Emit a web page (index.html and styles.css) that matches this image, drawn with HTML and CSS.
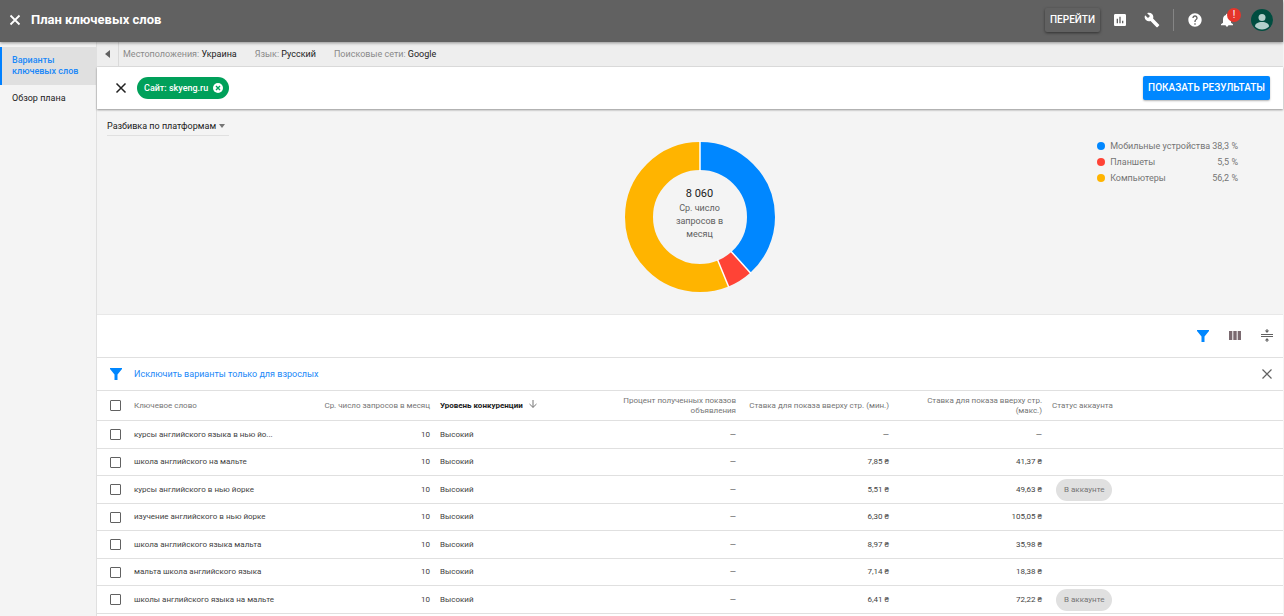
FILE: index.html
```html
<!DOCTYPE html>
<html lang="ru">
<head>
    <meta charset="UTF-8">
    <meta name="viewport" content="width=device-width, initial-scale=1.0">
    <title>План ключевых слов</title>
    <link rel="stylesheet" href="styles.css">
</head>
<body>
    <header class="topbar">
        <button class="icon-btn" type="button" aria-label="Закрыть">
            <svg width="16" height="16" viewBox="0 0 16 16"><path d="M3.500 3.500l9 9M12.500 3.500l-9 9" stroke="#fff" stroke-width="1.800"/></svg>
        </button>
        <h1>План ключевых слов</h1>
        <div class="topbar-tools">
            <button class="go-btn" type="button">ПЕРЕЙТИ</button>
            <button class="icon-btn" type="button" aria-label="Отчеты">
                <svg width="16" height="16" viewBox="0 0 24 24"><path d="M19 3H5c-1.100 0-2 .9-2 2v14c0 1.100.9 2 2 2h14c1.100 0 2-.9 2-2V5c0-1.100-.9-2-2-2zM9 17H7v-7h2v7zm4 0h-2V7h2v10zm4 0h-2v-4h2v4z"/></svg>
            </button>
            <button class="icon-btn" type="button" aria-label="Инструменты">
                <svg width="16" height="16" viewBox="0 0 24 24"><path d="M22.700 19l-9.100-9.100c.9-2.300.4-5-1.500-6.900-2-2-5-2.400-7.400-1.300L9 6 6 9 1.600 4.700C.4 7.100.9 10.100 2.900 12.100c1.900 1.900 4.600 2.400 6.900 1.500l9.100 9.100c.4.4 1 .4 1.400 0l2.300-2.300c.5-.4.5-1.100.1-1.400z"/></svg>
            </button>
            <span class="divider"></span>
            <button class="icon-btn" type="button" aria-label="Справка">
                <svg width="16" height="16" viewBox="0 0 24 24"><path d="M12 2C6.480 2 2 6.480 2 12s4.480 10 10 10 10-4.480 10-10S17.520 2 12 2zm1 17h-2v-2h2v2zm2.070-7.750l-.9.920C13.450 12.900 13 13.500 13 15h-2v-.5c0-1.100.45-2.100 1.170-2.830l1.240-1.260c.37-.36.59-.86.59-1.410 0-1.100-.9-2-2-2s-2 .9-2 2H8c0-2.210 1.790-4 4-4s4 1.790 4 4c0 .88-.36 1.680-.93 2.250z"/></svg>
            </button>
            <button class="icon-btn bell" type="button" aria-label="Уведомления">
                <svg width="16" height="16" viewBox="0 0 24 24"><path d="M12 22c1.100 0 2-.9 2-2h-4c0 1.100.89 2 2 2zm6-6v-5c0-3.070-1.640-5.640-4.500-6.320V4c0-.83-.67-1.500-1.500-1.500s-1.500.67-1.500 1.500v.68C7.630 5.360 6 7.920 6 11v5l-3 2.500V20h18v-1.500L18 16z"/></svg>
                <span class="badge">!</span>
            </button>
            <button class="icon-btn" type="button" aria-label="Аккаунт">
                <svg width="22" height="22" viewBox="0 0 22 22">
                    <circle cx="11" cy="11" r="11" fill="#004d40"/>
                    <circle cx="11" cy="8.500" r="3.500" fill="#b2cfcb"/>
                    <path d="M4 17.500c0-2.800 3-4.500 7-4.500s7 1.700 7 4.500c-1.800 2-4.300 3-7 3s-5.200-1-7-3z" fill="#b2cfcb"/>
                </svg>
            </button>
        </div>
    </header>

    <div class="layout">
        <nav class="sidebar">
            <a class="active" href="#ideas">Варианты ключевых слов</a>
            <a href="#overview">Обзор плана</a>
        </nav>

        <main class="main">
            <div class="settings">
                <button class="collapse" type="button" aria-label="Свернуть меню">
                    <svg width="5" height="8" viewBox="0 0 5 8"><path d="M5 0v8L0 4z"/></svg>
                </button>
                <span class="setting">Местоположения: <b>Украина</b></span>
                <span class="setting">Язык: <b>Русский</b></span>
                <span class="setting">Поисковые сети: <b>Google</b></span>
            </div>

            <div class="search">
                <button class="icon-btn" type="button" aria-label="Очистить">
                    <svg width="16" height="16" viewBox="0 0 16 16"><path d="M3.500 3.500l9 9M12.500 3.500l-9 9" stroke="#212121" stroke-width="1.500"/></svg>
                </button>
                <button class="chip" type="button">
                    Сайт: skyeng.ru
                    <svg width="10" height="10" viewBox="0 0 10 10"><circle cx="5" cy="5" r="5" fill="#fff"/><path d="M3 3l4 4M7 3l-4 4" stroke="#00a05a" stroke-width="1.400"/></svg>
                </button>
                <button class="results-btn" type="button">ПОКАЗАТЬ РЕЗУЛЬТАТЫ</button>
            </div>

            <section class="chart">
                <div class="breakdown">
                    <select aria-label="Разбивка">
                        <option>Разбивка по платформам</option>
                    </select>
                    <svg width="6" height="4" viewBox="0 0 6 4"><path d="M0 0h6L3 4z"/></svg>
                </div>

                <div class="donut">
                    <svg width="152" height="152" viewBox="0 0 152 152">
                        <g fill="none" stroke-width="28" transform="rotate(-90 76 76)">
                            <circle cx="76" cy="76" r="61" pathLength="1000" stroke="#0087ff" stroke-dasharray="383 617"/>
                            <circle cx="76" cy="76" r="61" pathLength="1000" stroke="#ff4336" stroke-dasharray="55 945" stroke-dashoffset="-383"/>
                            <circle cx="76" cy="76" r="61" pathLength="1000" stroke="#ffb400" stroke-dasharray="562 438" stroke-dashoffset="-438"/>
                        </g>
                        <g stroke="#fff" stroke-width="1.500">
                            <path d="M76 0v30"/>
                            <path d="M76 0v30" transform="rotate(137.900 76 76)"/>
                            <path d="M76 0v30" transform="rotate(157.700 76 76)"/>
                        </g>
                    </svg>
                    <div class="donut-label">
                        <strong>8 060</strong>
                        <span>Ср. число запросов в месяц</span>
                    </div>
                </div>

                <ul class="legend">
                    <li><i class="dot blue"></i>Мобильные устройства <span>38,3 %</span></li>
                    <li><i class="dot red"></i>Планшеты <span>5,5 %</span></li>
                    <li><i class="dot yellow"></i>Компьютеры <span>56,2 %</span></li>
                </ul>
            </section>

            <div class="toolbar">
                <button class="icon-btn blue-icon" type="button" aria-label="Фильтр">
                    <svg width="12" height="12" viewBox="0 0 12 12"><path d="M0 0h12v1L7.500 6.500V12h-3V6.500L0 1z"/></svg>
                </button>
                <button class="icon-btn columns-icon" type="button" aria-label="Столбцы">
                    <svg width="12" height="10" viewBox="0 0 12 10"><path d="M0 0h3.300v9H0zM4.300 0h3.400v9H4.300zM8.700 0H12v9H8.700z"/></svg>
                </button>
                <button class="icon-btn" type="button" aria-label="Плотность">
                    <svg width="12" height="14" viewBox="0 0 12 14"><path d="M0 5h12v1H0zM0 7h12v1H0zM5.500 0h1v1.500h1.700L6 4 3.800 1.500h1.700zM5.500 13h1v-1.500h1.700L6 9l-2.200 2.500h1.700z"/></svg>
                </button>
            </div>

            <div class="filter-row">
                <svg class="blue-icon" width="12" height="12" viewBox="0 0 12 12"><path d="M0 0h12v1L7.500 6.500V12h-3V6.500L0 1z"/></svg>
                <a href="#adult">Исключить варианты только для взрослых</a>
                <button class="icon-btn" type="button" aria-label="Закрыть фильтр">
                    <svg width="16" height="16" viewBox="0 0 16 16"><path d="M3.500 3.500l9 9M12.500 3.500l-9 9" stroke="#616161" stroke-width="1.200"/></svg>
                </button>
            </div>

            <table class="keywords">
                <colgroup>
                    <col class="col-check">
                    <col class="col-data" span="7">
                    <col>
                </colgroup>
                <thead>
                    <tr>
                        <th><input type="checkbox" aria-label="Выбрать все"></th>
                        <th>Ключевое слово</th>
                        <th class="num">Ср. число запросов в месяц</th>
                        <th class="sorted">Уровень конкуренции <svg width="8" height="8" viewBox="0 0 8 8"><path d="M4 0v7.300M.5 4L4 7.400 7.500 4" fill="none" stroke="#757575"/></svg></th>
                        <th class="num">Процент полученных показов объявления</th>
                        <th class="num">Ставка для показа вверху стр. (мин.)</th>
                        <th class="num">Ставка для показа вверху стр. (макс.)</th>
                        <th>Статус аккаунта</th>
                        <th></th>
                    </tr>
                </thead>
                <tbody>
                    <tr>
                        <td><input type="checkbox" aria-label="курсы английского языка в нью йо..."></td>
                        <td>курсы английского языка в нью йо...</td>
                        <td class="num">10</td>
                        <td>Высокий</td>
                        <td class="num">—</td>
                        <td class="num">—</td>
                        <td class="num">—</td>
                        <td></td>
                        <td></td>
                    </tr>
                    <tr>
                        <td><input type="checkbox" aria-label="школа английского на мальте"></td>
                        <td>школа английского на мальте</td>
                        <td class="num">10</td>
                        <td>Высокий</td>
                        <td class="num">—</td>
                        <td class="num">7,85 ₴</td>
                        <td class="num">41,37 ₴</td>
                        <td></td>
                        <td></td>
                    </tr>
                    <tr>
                        <td><input type="checkbox" aria-label="курсы английского в нью йорке"></td>
                        <td>курсы английского в нью йорке</td>
                        <td class="num">10</td>
                        <td>Высокий</td>
                        <td class="num">—</td>
                        <td class="num">5,51 ₴</td>
                        <td class="num">49,63 ₴</td>
                        <td><span class="status">В аккаунте</span></td>
                        <td></td>
                    </tr>
                    <tr>
                        <td><input type="checkbox" aria-label="изучение английского в нью йорке"></td>
                        <td>изучение английского в нью йорке</td>
                        <td class="num">10</td>
                        <td>Высокий</td>
                        <td class="num">—</td>
                        <td class="num">6,30 ₴</td>
                        <td class="num">105,05 ₴</td>
                        <td></td>
                        <td></td>
                    </tr>
                    <tr>
                        <td><input type="checkbox" aria-label="школа английского языка мальта"></td>
                        <td>школа английского языка мальта</td>
                        <td class="num">10</td>
                        <td>Высокий</td>
                        <td class="num">—</td>
                        <td class="num">8,97 ₴</td>
                        <td class="num">35,98 ₴</td>
                        <td></td>
                        <td></td>
                    </tr>
                    <tr>
                        <td><input type="checkbox" aria-label="мальта школа английского языка"></td>
                        <td>мальта школа английского языка</td>
                        <td class="num">10</td>
                        <td>Высокий</td>
                        <td class="num">—</td>
                        <td class="num">7,14 ₴</td>
                        <td class="num">18,38 ₴</td>
                        <td></td>
                        <td></td>
                    </tr>
                    <tr>
                        <td><input type="checkbox" aria-label="школы английского языка на мальте"></td>
                        <td>школы английского языка на мальте</td>
                        <td class="num">10</td>
                        <td>Высокий</td>
                        <td class="num">—</td>
                        <td class="num">6,41 ₴</td>
                        <td class="num">72,22 ₴</td>
                        <td><span class="status">В аккаунте</span></td>
                        <td></td>
                    </tr>
                </tbody>
            </table>
        </main>
    </div>
</body>
</html>
```
FILE: styles.css
```css
* {
    box-sizing: border-box;
}
body {
    display: flex;
    flex-direction: column;
    min-height: 100vh;
    margin: 0;
    padding-right: 1px;
    font-family: Roboto, 'Liberation Sans', sans-serif;
    font-size: 9px;
    line-height: 10px;
    color: #212121;
    background: #f4f4f4;
}
button, select {
    font: inherit;
    color: inherit;
    border: none;
    background: none;
    padding: 0;
    cursor: pointer;
}
svg {
    display: block;
    fill: currentColor;
}
a {
    text-decoration: none;
}
.icon-btn {
    display: flex;
    align-items: center;
    justify-content: center;
    min-width: 16px;
    color: #616161;
}

/* верхняя панель */
.topbar {
    position: relative;
    z-index: 2;
    display: flex;
    align-items: center;
    height: 42px;
    padding: 0 10px 2px 7px;
    color: #fff;
    background: #616161;
    box-shadow: 0 1px 3px rgba(0,0,0,0.4);
}
.topbar .icon-btn {
    color: #fff;
}
.topbar h1 {
    margin: 0 0 0 8px;
    font-size: 13px;
    line-height: 20px;
    font-weight: 700;
}
.topbar-tools {
    display: flex;
    align-items: center;
    gap: 16px;
    margin-left: auto;
}
.go-btn {
    height: 24px;
    padding: 0 5px;
    margin-right: -4px;
    font-size: 10px;
    font-weight: 500;
    border-radius: 2px;
    box-shadow: 0 1px 3px rgba(0,0,0,0.5);
}
.divider {
    width: 1px;
    height: 22px;
    margin: 0 -3px;
    background: #858585;
}
.bell {
    position: relative;
}
.badge {
    position: absolute;
    top: -4px;
    right: -6px;
    width: 14px;
    height: 14px;
    border-radius: 50%;
    font-size: 10px;
    line-height: 14px;
    background: #e5352b;
}

.layout {
    display: flex;
    flex: 1;
}
.sidebar {
    flex: 0 0 96px;
    padding-top: 5px;
}
.sidebar a {
    display: block;
    padding: 8px 12px;
    line-height: 11px;
    color: #212121;
}
.sidebar .active {
    padding: 8px 10px;
    border-left: 2px solid #0080ff;
    font-weight: 500;
    color: #1a88f8;
    background: #e0e0e0;
}
.main {
    flex: 1;
    min-width: 0;
    border-left: 1px solid #e0e0e0;
    background: #fff;
}

.settings {
    display: flex;
    align-items: center;
    gap: 18px;
    height: 25px;
    color: #8a8a8a;
    background: #eee;
    border-bottom: 1px solid #e0e0e0;
}
.settings b {
    font-weight: 400;
    color: #212121;
}
.collapse {
    display: flex;
    align-items: center;
    justify-content: center;
    width: 22px;
    height: 100%;
    margin-right: -14px;
    color: #616161;
    border-right: 1px solid #dadada;
}

.search {
    position: relative;
    z-index: 1;
    display: flex;
    align-items: center;
    height: 42px;
    padding: 0 13px 0 16px;
    background: #fff;
    box-shadow: 0 1px 2px rgba(0,0,0,0.4);
}
.chip {
    display: flex;
    align-items: center;
    gap: 5px;
    height: 22px;
    margin-left: 8px;
    padding: 0 6px 0 7px;
    border-radius: 11px;
    font-weight: 500;
    color: #fff;
    background: #00a05a;
}
.results-btn {
    height: 24px;
    margin-left: auto;
    padding: 0 5px;
    border-radius: 2px;
    font-size: 10px;
    font-weight: 500;
    color: #fff;
    background: #0087ff;
    box-shadow: 0 1px 2px rgba(0,0,0,0.3);
}

/* диаграмма по платформам */
.chart {
    display: grid;
    grid-template-columns: 1fr auto 1fr;
    align-items: start;
    height: 205px;
    padding-left: 10px;
    background: #f4f4f4;
}
.breakdown {
    position: relative;
    justify-self: start;
    margin-top: 7px;
    border-bottom: 1px solid #e0e0e0;
}
.breakdown select {
    display: block;
    width: 122px;
    height: 19px;
    appearance: none;
}
.breakdown svg {
    position: absolute;
    top: 8px;
    right: 4px;
    color: #757575;
    pointer-events: none;
}
.donut {
    display: grid;
    place-items: center;
    margin: 32px 0 0 9px;
}
.donut svg, .donut-label {
    grid-area: 1 / 1;
}
.donut-label {
    width: 52px;
    padding-bottom: 8px;
    line-height: 13px;
    text-align: center;
    color: #616161;
}
.donut-label strong {
    display: block;
    font-size: 11px;
    line-height: 16px;
    font-weight: 400;
    color: #212121;
}
.legend {
    justify-self: end;
    min-width: 139px;
    margin: 29px 45px 0 0;
    padding: 0;
    list-style: none;
    color: #757575;
}
.legend li {
    display: flex;
    align-items: center;
    height: 16px;
    white-space: nowrap;
}
.legend span {
    margin-left: auto;
    padding-left: 2px;
}
.dot {
    flex: none;
    width: 8px;
    height: 8px;
    margin-right: 5px;
    border-radius: 50%;
}
.dot.blue {
    background: #0087ff;
}
.dot.red {
    background: #ff4336;
}
.dot.yellow {
    background: #ffb400;
}

.toolbar {
    display: flex;
    align-items: center;
    justify-content: flex-end;
    gap: 16px;
    height: 43px;
    padding-right: 8px;
    border-top: 1px solid #e8e8e8;
}
.blue-icon, .toolbar .blue-icon {
    color: #0087ff;
}
.toolbar .columns-icon {
    color: #7a6a70;
}
.filter-row {
    display: flex;
    align-items: center;
    gap: 12px;
    height: 34px;
    padding: 0 8px 0 13px;
    border-top: 1px solid #e0e0e0;
    border-bottom: 1px solid #e0e0e0;
}
.filter-row a {
    color: #1a88f8;
}
.filter-row .icon-btn {
    margin-left: auto;
}

.keywords {
    width: 100%;
    table-layout: fixed;
    border-collapse: separate;
    border-spacing: 0;
    font-size: 8px;
}
.col-check {
    width: 32px;
}
.col-data {
    width: 153px;
}
.keywords th, .keywords td {
    height: 28px;
    padding: 0 5px;
    text-align: left;
    color: #424242;
    border-bottom: 1px solid #e0e0e0;
}
.keywords tr:nth-child(even) td {
    height: 27px;
}
.keywords thead th {
    height: 30px;
    font-weight: 400;
    color: #757575;
}
.keywords .num {
    text-align: right;
}
.keywords thead .sorted {
    font-weight: 700;
    color: #212121;
}
.sorted svg {
    display: inline-block;
    margin-left: 4px;
}
.keywords th:first-child, .keywords td:first-child {
    padding: 0 0 0 13px;
}
.keywords input {
    display: block;
    width: 11px;
    height: 11px;
    margin: 0;
    appearance: none;
    border: 1px solid #616161;
    border-radius: 1px;
}
.keywords input:checked {
    background: #0087ff;
}
.status {
    display: inline-block;
    margin-left: 4px;
    padding: 0 8px;
    border-radius: 11px;
    line-height: 22px;
    color: #757575;
    background: #e0e0e0;
    vertical-align: middle;
}
```
